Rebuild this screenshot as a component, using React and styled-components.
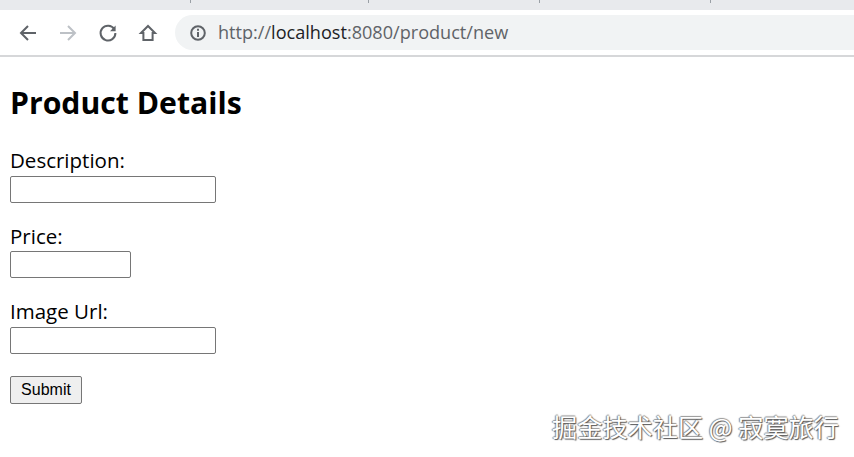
import React from 'react';
import styled, { createGlobalStyle } from 'styled-components';

const Global = createGlobalStyle`
  html, body { margin: 0; padding: 0; background: #fff; }
  body { width: 854px; height: 457px; overflow: hidden; position: relative; }
`;

const TABS = [191, 178, 171, 171];

export default function App() {
  return (
    <>
      <Global />
      <TabStrip>
        {TABS.map((w, i) => <TabCell key={i} $w={w} />)}
      </TabStrip>
      <Toolbar>
        <NavBtn>
          <svg width="20" height="20" viewBox="0 0 20 20" fill="none" stroke="#5f6368" strokeWidth="2">
            <path d="M18 10H3M10 3l-7 7 7 7" />
          </svg>
        </NavBtn>
        <NavBtn>
          <svg width="20" height="20" viewBox="0 0 20 20" fill="none" stroke="#bdc1c6" strokeWidth="2">
            <path d="M2 10h15M10 3l7 7-7 7" />
          </svg>
        </NavBtn>
        <NavBtn>
          <svg width="20" height="20" viewBox="0 0 20 20" fill="none" stroke="#5f6368" strokeWidth="2">
            <path d="M16.3 6.2A7.4 7.4 0 1 0 17.4 10" />
            <path d="M17.6 2.6v5.6H12z" fill="#5f6368" stroke="none" />
          </svg>
        </NavBtn>
        <NavBtn>
          <svg width="20" height="20" viewBox="0 0 20 20" fill="none" stroke="#5f6368" strokeWidth="2">
            <path d="M3 10l7-7 7 7h-2.4v7H5.4v-7z" strokeLinejoin="miter" />
          </svg>
        </NavBtn>
        <Omnibox>
          <svg width="18" height="18" viewBox="0 0 18 18" fill="none" stroke="#5f6368" strokeWidth="2">
            <circle cx="9" cy="9" r="6.8" />
            <path d="M9 8v5M9 4.8v2" />
          </svg>
          <Url>
            http://<Host>localhost</Host>:8080/product/new
          </Url>
        </Omnibox>
      </Toolbar>
      <Page>
        <Title>Product Details</Title>
        <Form>
          <Field>
            <Label>Description:</Label>
            <Input $w={206} />
          </Field>
          <Field>
            <Label>Price:</Label>
            <Input $w={121} />
          </Field>
          <Field>
            <Label>Image Url:</Label>
            <Input $w={206} />
          </Field>
          <Submit type="button">Submit</Submit>
        </Form>
      </Page>
      <Watermark>掘金技术社区 @ 寂寞旅行</Watermark>
    </>
  );
}

const TabStrip = styled.div`
  display: flex;
  height: 10px;
  background: #e8eaed;
`;

const TabCell = styled.div`
  width: ${(p) => p.$w}px;
  height: 3px;
  box-sizing: border-box;
  border-right: 1px solid #9aa0a6;
`;

const Toolbar = styled.div`
  display: flex;
  align-items: center;
  box-sizing: border-box;
  height: 47px;
  padding: 0 0 0 8px;
  background: #fff;
  border-bottom: 2px solid #d6d7d9;
`;

const NavBtn = styled.div`
  display: flex;
  align-items: center;
  justify-content: center;
  width: 40px;
  height: 35px;
`;

const Omnibox = styled.div`
  display: flex;
  align-items: center;
  flex: 1;
  gap: 11px;
  height: 35px;
  margin-left: 7px;
  padding-left: 14px;
  background: #f1f3f4;
  border-radius: 18px 0 0 18px;
`;

const Url = styled.span`
  margin-bottom: 2px;
  font-family: "Open Sans", "Noto Sans", sans-serif;
  font-size: 18.1px;
  color: #5f6368;
`;

const Host = styled.span`
  color: #202124;
`;

const Page = styled.main`
  padding: 0 10px;
  color: #000;
  font-family: "Open Sans", "Noto Sans", sans-serif;
`;

const Title = styled.h1`
  margin: 0;
  padding-top: 24px;
  font-size: 30.2px;
  line-height: 44px;
  font-weight: 700;
`;

const Form = styled.form`
  display: flex;
  flex-direction: column;
  align-items: flex-start;
  margin-top: 23.4px;
`;

const Field = styled.div`
  display: flex;
  flex-direction: column;
  align-items: flex-start;
  margin-bottom: 21px;
`;

const Label = styled.label`
  margin-bottom: 2px;
  font-size: 20.5px;
  line-height: 25.5px;
`;

const Input = styled.input`
  box-sizing: border-box;
  width: ${(p) => p.$w}px;
  height: 27px;
  margin: 0;
  padding: 1px 2px;
  background: #fff;
  border: 1px solid #767676;
  border-radius: 2px;
`;

const Submit = styled.button`
  box-sizing: border-box;
  width: 72px;
  height: 28px;
  margin: 1px 0 0;
  padding: 0;
  font-family: "Liberation Sans", Arial, sans-serif;
  font-size: 16px;
  color: #000;
  background: #efefef;
  border: 1px solid #767676;
  border-radius: 2px;
`;

const Watermark = styled.div`
  position: absolute;
  right: 15px;
  top: 410px;
  font-family: "Noto Sans CJK SC", "Noto Sans", sans-serif;
  font-size: 25.2px;
  line-height: 32px;
  color: #fff;
  white-space: nowrap;
  text-shadow: 1px 1px 1px #555, -1px 0 1px #888, 0 -1px 1px #999;
`;
